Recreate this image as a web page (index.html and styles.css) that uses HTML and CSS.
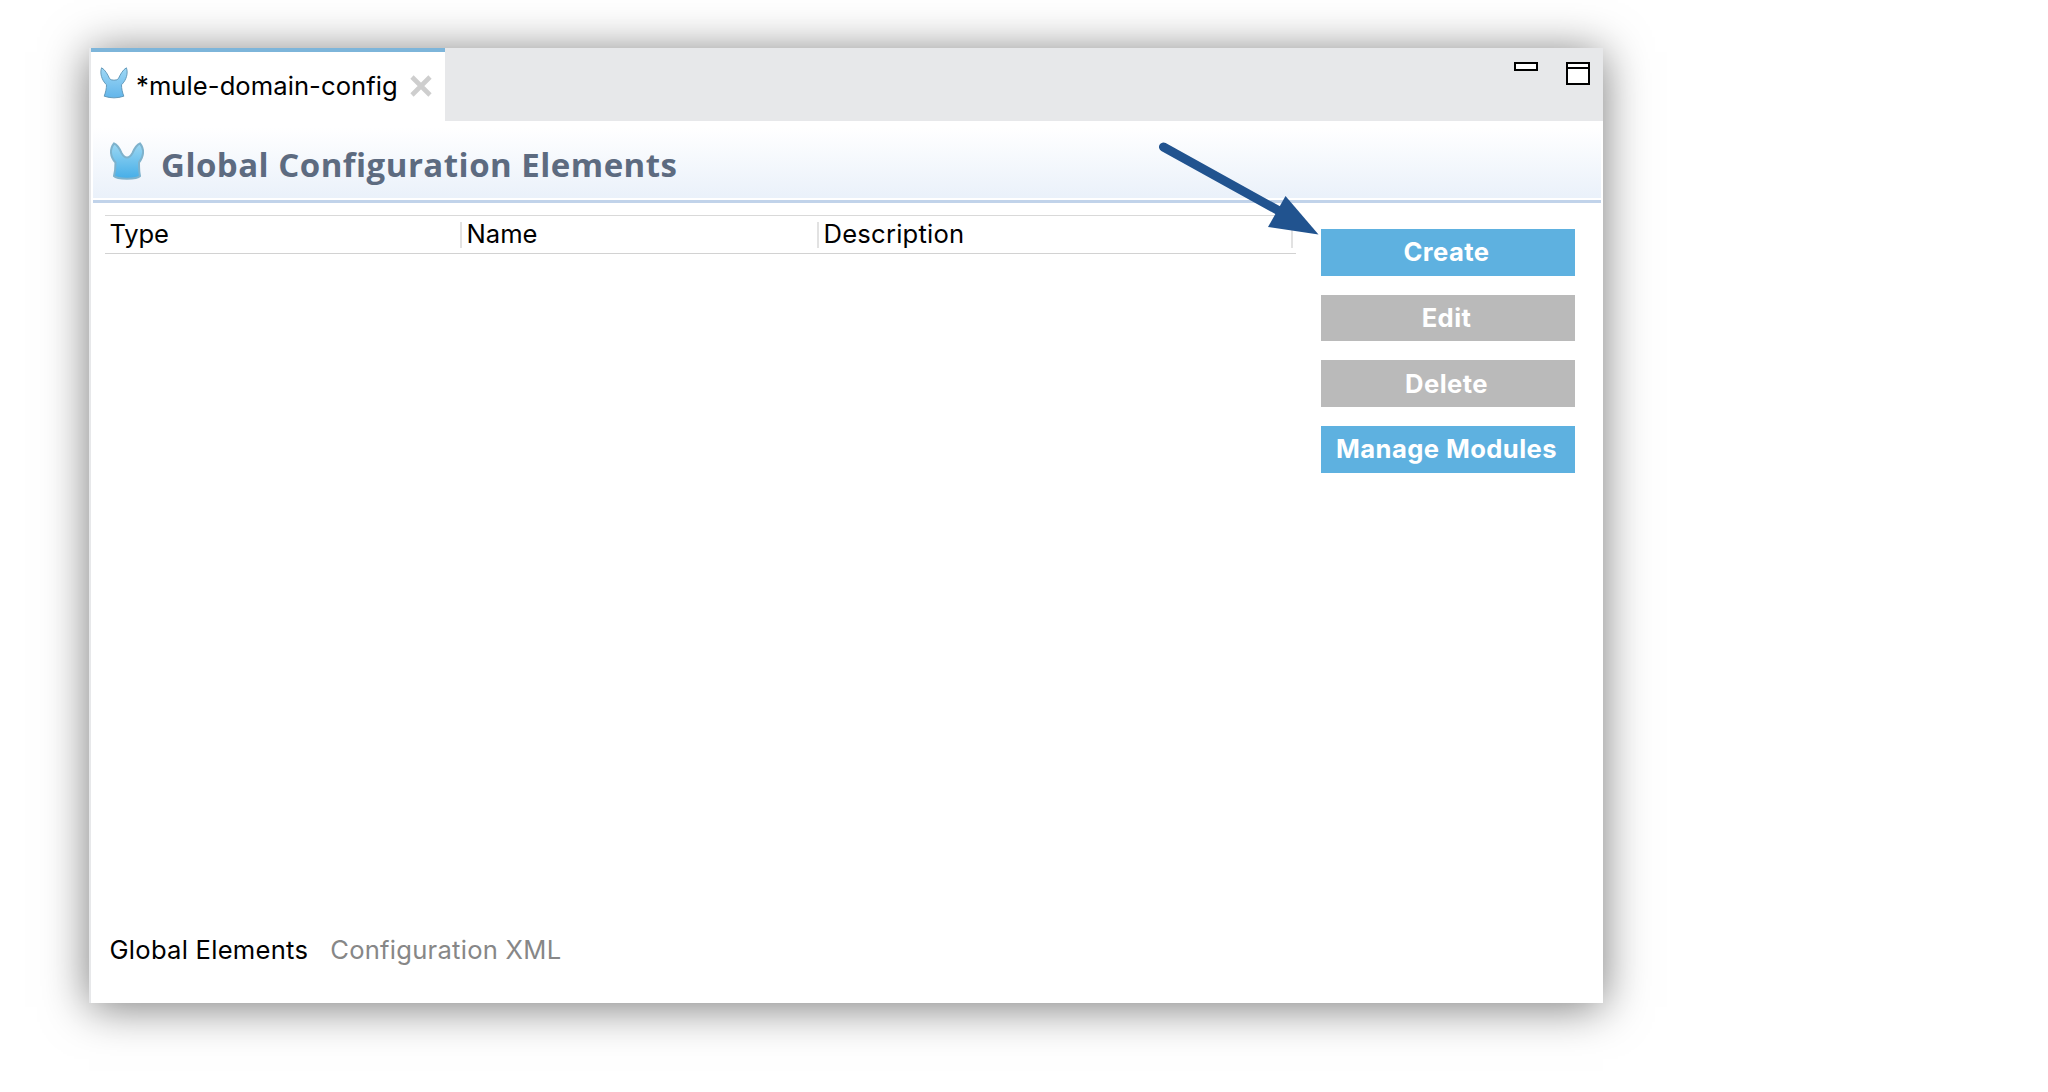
FILE: index.html
```html
<!DOCTYPE html>
<html lang="en">
<head>
<meta charset="utf-8">
<title>mule-domain-config</title>
<link rel="stylesheet" href="styles.css">
</head>
<body>
<main class="window">
  <header class="tabbar">
    <div class="tab">
      <svg class="tab-logo" viewBox="0 0 28 32">
        <defs><linearGradient id="ear" x1="0" y1="0" x2="0" y2="1"><stop offset="0" stop-color="#9fd8f5"/><stop offset="1" stop-color="#62b5ea"/></linearGradient></defs>
        <path d="M1.600 .8C5 2.500 8 8 9.500 11.500Q10.500 13.200 14 13.200Q17.500 13.200 18.500 11.500C20 8 23 2.500 26.400 .8C28.300 6 26.500 13 21.500 17.800C21.500 21.500 22.300 25 23.800 29.200Q14 32.500 4.200 29.200C5.700 25 6.500 21.500 6.500 17.800C1.500 13-.3 6 1.600 .8Z" fill="url(#ear)" stroke="#5b93b4" stroke-width=".9"/>
      </svg>
      <span class="tab-name">*mule-domain-config</span>
      <svg class="tab-close" viewBox="0 0 22 22"><path d="M2 2L20 20M20 2L2 20" stroke="#cecece" stroke-width="4.600"/></svg>
    </div>
    <div class="window-controls">
      <svg class="control" viewBox="0 0 24 24"><path d="M1 1H23V8H1Z" fill="#fff" stroke="#000" stroke-width="2"/></svg>
      <svg class="control" viewBox="0 0 24 24"><path d="M1 1H23V22H1Z" fill="#fff" stroke="#000" stroke-width="2"/><path d="M1 6H23" stroke="#000" stroke-width="2"/></svg>
    </div>
  </header>
  <section class="heading">
    <svg class="heading-logo" viewBox="0 0 36 38">
      <defs><linearGradient id="ear-large" x1="0" y1="0" x2="0" y2="1"><stop offset="0" stop-color="#9cd7f2"/><stop offset="1" stop-color="#45aee8"/></linearGradient></defs>
      <path d="M5 1.500C9 3 11 7.500 12.500 11Q15 15.500 18 15.500Q21 15.500 23.500 11C25 7.500 27 3 31 1.500C35.500 7 35 14.500 30 20.500C30 25 30 30 31 34C28 37.500 8 37.500 5 34C6 30 6.500 25 6.500 20.500C1 14.500 .5 7 5 1.500Z" fill="url(#ear-large)" stroke="#7eb2cc" stroke-width="2"/>
    </svg>
    <h1 class="title">Global Configuration Elements</h1>
  </section>
  <section class="content">
    <div class="table-head">
      <div class="column column-type">Type</div>
      <div class="column column-name">Name</div>
      <div class="column column-desc">Description</div>
    </div>
    <div class="actions">
      <button class="action primary">Create</button>
      <button class="action">Edit</button>
      <button class="action">Delete</button>
      <button class="action primary">Manage Modules</button>
    </div>
  </section>
  <footer class="pages">
    <span class="page">Global Elements</span>
    <span class="page other">Configuration XML</span>
  </footer>
  <svg class="arrow" viewBox="0 0 160 98">
    <path d="M6.500 10L124 75" stroke="#21538f" stroke-width="9" stroke-linecap="round"/>
    <path d="M128.500 59L161.500 97.500L111 90Z" fill="#21538f"/>
  </svg>
</main>
</body>
</html>
```
FILE: styles.css
```css
* { box-sizing: border-box; }
body {
  margin: 0;
  min-height: 1092px;
  padding: 48px 0 0 89px;
  background: #fff;
  font-family: Inter, "Liberation Sans", sans-serif;
  font-size: 25.6px;
  color: #000;
}
svg { display: block; flex: none; overflow: visible; }
.window {
  position: relative;
  display: flex;
  flex-direction: column;
  width: 1514px;
  height: 955px;
  background: #fff;
  border-left: 2px solid #e7e8ea;
  box-shadow: 0 4px 43px rgba(0, 0, 0, .53);
}
.tabbar {
  display: flex;
  justify-content: space-between;
  height: 73px;
  background: #e7e8ea;
}
.tab {
  display: flex;
  align-items: center;
  width: 354px;
  padding: 0 0 2px 9px;
  background: #fff;
  border-top: 4px solid #7db5da;
}
.tab-logo { width: 28px; height: 32px; margin-bottom: 5px; }
.tab-name { width: 274px; margin-left: 8px; letter-spacing: .06px; white-space: nowrap; }
.tab-close { width: 22px; height: 22px; }
.window-controls { display: flex; gap: 28px; padding: 14px 13px 0 0; }
.control { width: 24px; height: 24px; }
.heading {
  display: flex;
  align-items: center;
  height: 82px;
  margin: 0 2px;
  padding-left: 16px;
  background: linear-gradient(#fff 8%, #eaf1fa 97.5%, #fff 97.5%);
  border-bottom: 3px solid #c1d3ea;
}
.heading-logo { width: 36px; height: 38px; }
.title {
  margin: 8px 0 0 16px;
  font: 700 33px/40px "Open Sans", sans-serif;
  letter-spacing: .48px;
  color: #5d6b80;
  white-space: nowrap;
}
.content { display: flex; flex: 1; justify-content: space-between; padding: 12px 28px 0 14px; }
.table-head {
  display: flex;
  align-items: center;
  width: 1191px;
  height: 39px;
  border-top: 1px solid #d9d9d9;
  border-bottom: 1px solid #d2d2d2;
}
.column { height: 26px; line-height: 24px; padding-left: 4.5px; border-right: 2px solid #e2e2e2; }
.column-type { width: 357px; letter-spacing: -.2px; }
.column-name { width: 357px; }
.column-desc { width: 474px; letter-spacing: .22px; }
.actions { display: flex; flex-direction: column; gap: 19.2px; width: 254px; padding-top: 14px; }
.action {
  height: 46.5px;
  padding: 0 3px 0 0;
  border: 0;
  background: #bababa;
  color: #fff;
  font: 700 25.6px/46px Inter, sans-serif;
  letter-spacing: .42px;
  white-space: nowrap;
}
.primary { background: #5eb1e0; }
.pages { display: flex; gap: 22px; height: 69px; padding-left: 18.5px; line-height: 32px; letter-spacing: .25px; }
.other { color: #878787; }
.arrow { position: absolute; left: 1066px; top: 89px; width: 160px; height: 98px; }
```
